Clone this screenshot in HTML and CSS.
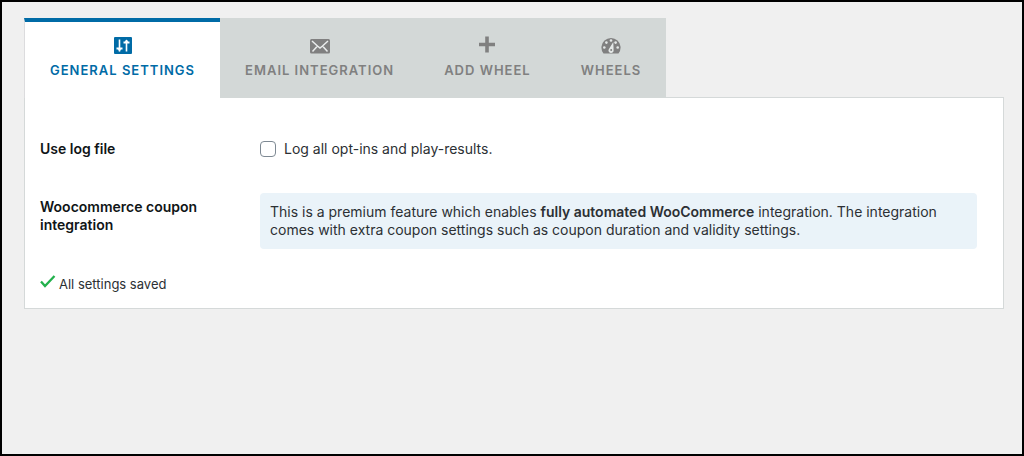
FILE: index.html
```html
<!DOCTYPE html>
<html lang="en">
<head>
<meta charset="utf-8">
<title>General settings</title>
<link rel="stylesheet" href="styles.css">
</head>
<body>
<main class="page">
  <nav class="tabs" aria-label="Settings sections">
    <button type="button" class="tab tab-active" aria-current="page">
      <svg class="tab-icon" viewBox="0 0 20 20" aria-hidden="true"><rect x="1" y="1" width="18" height="17" rx="1" fill="currentColor"/><path d="M6.500 3.500v12M13.500 4v11.500" stroke="#fff" stroke-width="1.600" fill="none"/><path d="M3.500 11.500h6v2h-1.500l-1.500 2-1.500-2H3.500zM10.500 7.500h6v-2H15l-1.500-2-1.500 2h-1.500z" fill="#fff"/></svg>
      General settings
    </button>
    <button type="button" class="tab">
      <svg class="tab-icon" viewBox="0 0 20 20" aria-hidden="true"><rect x="0" y="3" width="20" height="14.500" rx="1.500" fill="currentColor"/><path d="M2 5l5.500 5 2.500 2 2.500-2L18 5M2.500 15.500l5-5.500M17.500 15.500l-5-5.500" stroke="#e9ecec" stroke-width="1.500" fill="none"/></svg>
      Email integration
    </button>
    <button type="button" class="tab">
      <svg class="tab-icon" viewBox="0 0 20 20" aria-hidden="true"><path d="M8.200 0.500h3.600v6.200h6.200v3.600h-6.200v6.200H8.200v-6.200H2V6.700h6.200z" fill="currentColor"/></svg>
      Add wheel
    </button>
    <button type="button" class="tab">
      <svg class="tab-icon" viewBox="0 0 20 20" aria-hidden="true"><path d="M2.500 17.500A9.600 9.600 0 1 1 17.500 17.500z" fill="currentColor"/><g fill="#e4e8e7"><circle cx="10" cy="4.500" r="1.300"/><circle cx="5.400" cy="6.600" r="1.300"/><circle cx="14.600" cy="6.600" r="1.300"/><circle cx="3.300" cy="11.500" r="1.300"/><circle cx="16.700" cy="11.500" r="1.300"/><path d="m12.300 6 .3 8a2.600 2.600 0 1 1-4.800-.8z"/></g><circle cx="10.200" cy="14" r="1" fill="currentColor"/></svg>
      Wheels
    </button>
  </nav>
  <form class="panel">
    <div class="row">
      <h2 class="row-title">Use log file</h2>
      <label class="check"><input type="checkbox" class="check-box">Log all opt-ins and play-results.</label>
    </div>
    <div class="row">
      <h2 class="row-title">Woocommerce coupon integration</h2>
      <p class="notice">This is a premium feature which enables <strong>fully automated WooCommerce</strong> integration. The integration comes with extra coupon settings such as coupon duration and validity settings.</p>
    </div>
    <p class="status" role="status">
      <svg class="status-icon" viewBox="0 0 16 14" aria-hidden="true"><path d="M1 6.500l4 4.500L14.500 1" fill="none" stroke="#22b14c" stroke-width="2.300"/></svg>
      All settings saved
    </p>
  </form>
</main>
</body>
</html>
```
FILE: styles.css
```css
* {
  box-sizing: border-box;
}

body {
  margin: 0;
  background: #f0f0f0;
  color: #2c3034;
  font: 14px/18px Inter, sans-serif;
}

.page {
  min-height: 100vh;
  padding: 16px 18px 16px 22px;
  border: 2px solid #000;
}

.tabs {
  display: flex;
}

.tab {
  display: flex;
  flex-direction: column;
  align-items: center;
  gap: 6px;
  height: 80px;
  padding: 18px 25px 0;
  border: 0;
  background: #d3d8d7;
  color: #808080;
  font: 600 13px/16px Inter, sans-serif;
  letter-spacing: 1px;
  text-transform: uppercase;
  white-space: nowrap;
  cursor: pointer;
}

.tab-active {
  position: relative;
  padding-top: 14px;
  border-top: 4px solid #006ba6;
  border-left: 1px solid #dcdcde;
  background: #fff;
  color: #006ba6;
}

.tab-icon {
  width: 20px;
  height: 20px;
}

.panel {
  display: flex;
  flex-direction: column;
  margin-top: -1px;
  padding: 42px 26px 15px 15px;
  border: 1px solid #d5d9d9;
  background: #fff;
}

.row {
  display: grid;
  grid-template-columns: 180px 1fr;
  column-gap: 40px;
  margin-bottom: 35px;
}

.row-title {
  margin: 0;
  color: #101517;
  font-size: 14px;
  font-weight: 600;
  line-height: 18px;
}

.row + .row {
  margin-bottom: 26px;
}

.row + .row .row-title {
  padding-top: 5px;
}

.check {
  display: flex;
  align-items: center;
  gap: 8px;
}

.check-box {
  width: 16px;
  height: 16px;
  margin: 0;
  border: 1px solid #7e8993;
  border-radius: 4px;
  background: #fff;
  appearance: none;
}

.check-box:checked {
  background: #006ba6;
}

.notice {
  margin: 0;
  padding: 10px;
  border-radius: 4px;
  background: #eaf3f9;
}

.notice strong {
  font-weight: 600;
}

.status {
  display: flex;
  gap: 3px;
  margin: 0;
  font-size: 13px;
}

.status-icon {
  width: 16px;
  height: 14px;
}
```
